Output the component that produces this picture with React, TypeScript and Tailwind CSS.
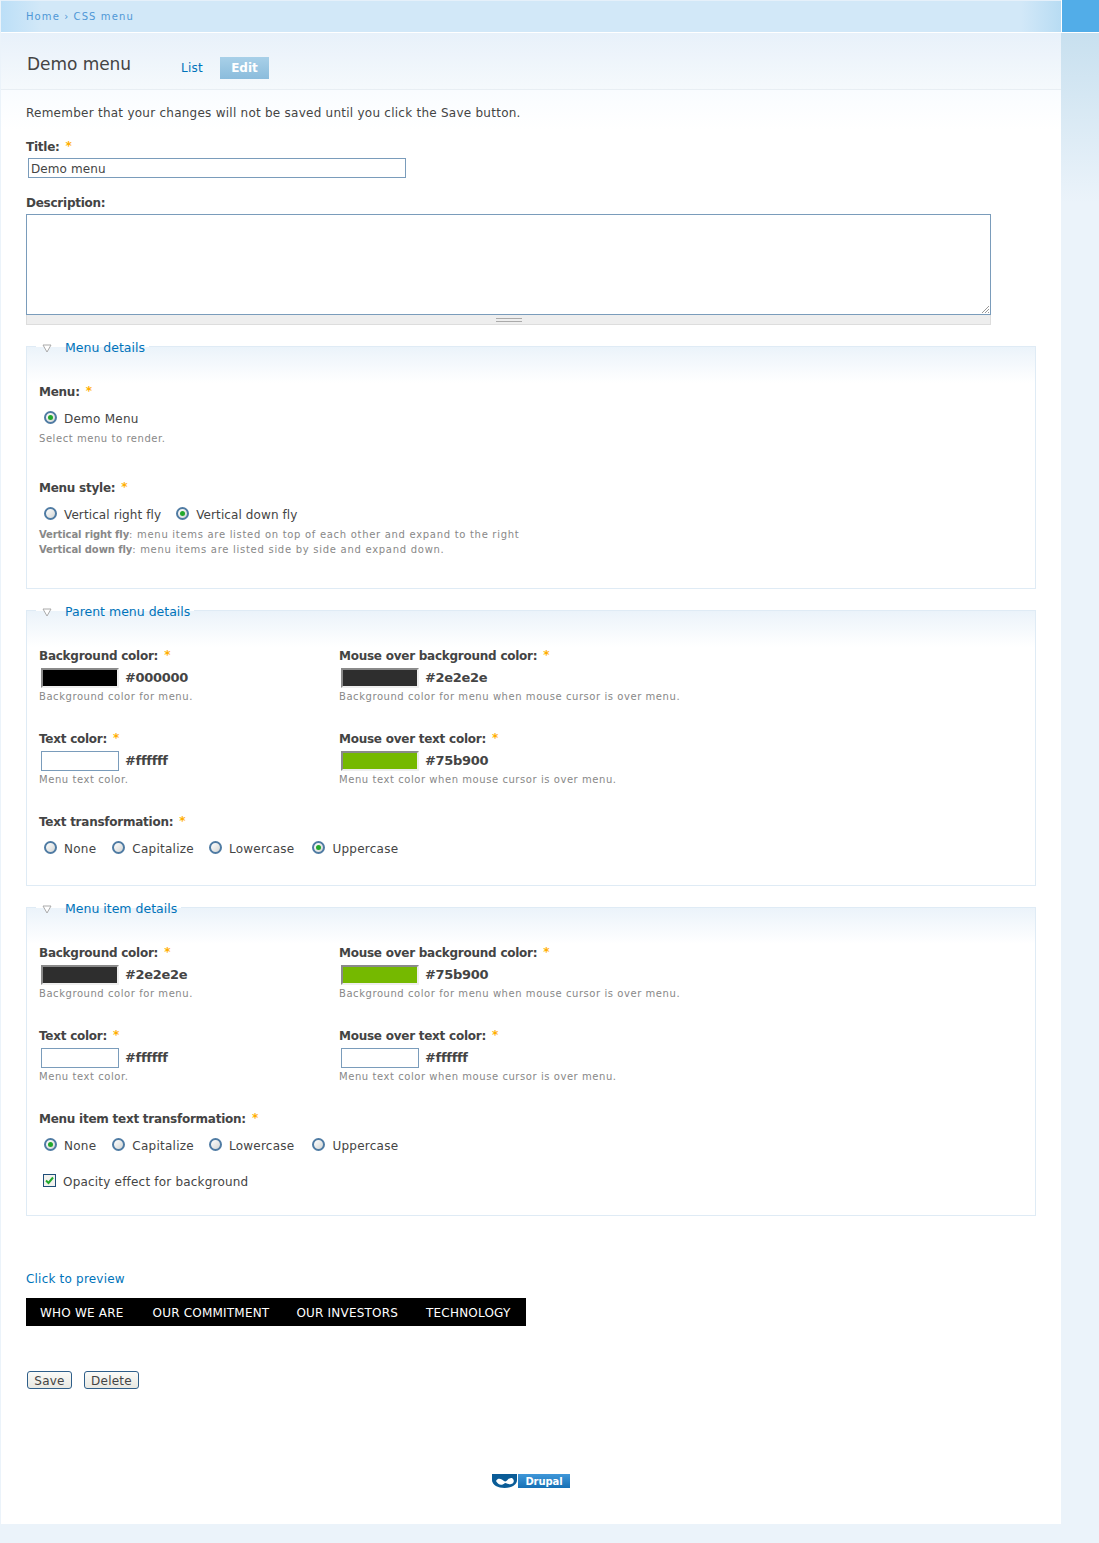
import React from "react";

const font = "font-['DejaVu_Sans','Verdana',sans-serif]";

function Star() {
  return <span className="ml-[6px] align-[1px] font-bold tracking-normal text-[#ffae00]">*</span>;
}

function FieldLabel({ children, required = true }: { children: React.ReactNode; required?: boolean }) {
  return (
    <div className="h-[16px] pt-px text-[12px] leading-[16px] font-bold tracking-[-0.25px] text-[#444]">
      {children}
      {required && <Star />}
    </div>
  );
}

function Hint({ children }: { children: React.ReactNode }) {
  return <div className="text-[10px] leading-[15px] tracking-[0.56px] text-[#888]">{children}</div>;
}

function Radio({
  label,
  checked = false,
  tracking = "tracking-[0.25px]",
}: {
  label: string;
  checked?: boolean;
  tracking?: string;
}) {
  return (
    <label className={`flex items-center text-[12px] leading-[16px] text-[#444] ${tracking}`}>
      <span className="mr-[7px] -mt-[4px] flex h-[13px] w-[13px] items-center justify-center rounded-full border-2 border-[#4f7ba3] bg-gradient-to-br from-[#ffffff] to-[#d4d6d4]">
        {checked && <span className="h-[5px] w-[5px] rounded-full bg-[#22a82c]" />}
      </span>
      {label}
    </label>
  );
}

function RadioRow({
  items,
  checked,
  tracking,
}: {
  items: { label: string; mr: string }[];
  checked: string;
  tracking?: string;
}) {
  return (
    <div className="mt-[13px] flex pl-[5px]">
      {items.map((item) => (
        <div key={item.label} className={item.mr}>
          <Radio label={item.label} checked={item.label === checked} tracking={tracking} />
        </div>
      ))}
    </div>
  );
}

function ColorField({
  label,
  value,
  swatch,
  hint,
}: {
  label: string;
  value: string;
  swatch: string;
  hint: string;
}) {
  const white = swatch === "#ffffff";
  return (
    <div className="h-[83px]">
      <FieldLabel>{label}</FieldLabel>
      <div className="mt-[6px] flex h-[20px] items-center pl-[2px]">
        <div
          className={
            white
              ? "h-[20px] w-[78px] border border-[#7a9cbb] bg-white"
              : "h-[20px] w-[78px] border-2 border-[#8a8a8a] border-r-[#eee] border-b-[#eee]"
          }
          style={{ backgroundColor: swatch }}
        />
        <span className="ml-[6px] text-[13px] font-bold tracking-[-0.3px] text-[#444]">{value}</span>
      </div>
      <div className="mt-[1px]">
        <Hint>{hint}</Hint>
      </div>
    </div>
  );
}

function Box({ title, height, children }: { title: string; height: string; children: React.ReactNode }) {
  return (
    <fieldset
      className={`${height} border border-[#dfebf5] bg-[linear-gradient(#ebf3fa,#ffffff_36px)] px-[12px]`}
    >
      <legend className="-ml-[3px] flex h-[16px] items-center pt-[5px] pr-[4px] pl-[6px] text-[12.5px] text-[#0073ba]">
        <svg width="10" height="9" viewBox="0 0 10 9" className="mr-[13px]">
          <path d="M1 1 H9 L5 8 Z" fill="#fff" stroke="#aaa" />
        </svg>
        {title}
      </legend>
      {children}
    </fieldset>
  );
}

const transforms = [
  { label: "None", mr: "mr-[16px]" },
  { label: "Capitalize", mr: "mr-[15px]" },
  { label: "Lowercase", mr: "mr-[18px]" },
  { label: "Uppercase", mr: "" },
];

export default function App() {
  return (
    <div className={`${font} flex h-[1543px] flex-col bg-[#ebf3fa] pl-px`}>
      <div className="flex h-[1524px]">
        {/* Main column */}
        <main className="w-[1060px] shrink-0 bg-white">
          <div className="flex h-[33px] items-center border-t border-b border-t-[#e5f0fa] border-b-white bg-[linear-gradient(90deg,#bcdff7,#d2e8f8_40px,#d2e8f8_1020px,#b8dcf3)] pl-[25px] text-[10px] tracking-[1.1px] text-[#4f97d6]">
            Home › CSS menu
          </div>

          {/* Title and tabs */}
          <div className="flex h-[57px] items-center border-b border-[#e8eef3] bg-[linear-gradient(#e8f1fa,#f5f9fc)] pl-[26px]">
            <h1 className="mt-[7px] w-[154px] text-[17px] tracking-[-0.05px] text-[#444]">Demo menu</h1>
            <a className="mt-[13px] text-[12px] tracking-[0.25px] text-[#0073ba]">List</a>
            <span className="mt-[13px] ml-[17px] flex h-[22px] w-[49px] items-center justify-center bg-[linear-gradient(#a8d0e8,#8bbcdc)] text-[12px] font-bold text-white">
              Edit
            </span>
          </div>

          <div className="bg-[linear-gradient(#f9fcff,#ffffff_40px)] px-[25px] pt-[15px]">
            <p className="text-[12px] leading-[16px] tracking-[0.25px] text-[#444]">
              Remember that your changes will not be saved until you click the Save button.
            </p>

            <div className="mt-[16px]">
              <FieldLabel>Title:</FieldLabel>
            </div>
            <input
              readOnly
              value="Demo menu"
              className="mt-[5px] ml-[2px] block h-[20px] w-[378px] border border-[#7a9cbb] px-[2px] pt-px text-[12px] tracking-[0.1px] text-[#444]"
            />

            <div className="mt-[16px]">
              <FieldLabel required={false}>Description:</FieldLabel>
            </div>
            <div className="mt-[4px] w-[965px]">
              <div className="relative h-[101px] border border-[#7a9cbb] bg-white">
                <svg width="8" height="8" viewBox="0 0 8 8" className="absolute right-[1px] bottom-[1px]">
                  <path d="M1 8 L8 1 M4 8 L8 4 M7 8 L8 7" stroke="#999" />
                </svg>
              </div>
              <div className="flex h-[10px] items-center justify-center border-r border-b border-l border-[#ddd] bg-[#eee]">
                <div className="h-[4px] w-[26px] border-t border-b border-[#aaa]" />
              </div>
            </div>

            {/* Menu details */}
            <div className="mt-[13px] w-[1010px]">
              <Box title="Menu details" height="h-[251px]">
                <div className="pt-[28px]">
                  <FieldLabel>Menu:</FieldLabel>
                  <div className="mt-[13px] pl-[5px]">
                    <Radio label="Demo Menu" checked />
                  </div>
                  <div className="mt-[4px]">
                    <Hint>Select menu to render.</Hint>
                  </div>
                  <div className="mt-[32px]">
                    <FieldLabel>Menu style:</FieldLabel>
                  </div>
                  <RadioRow
                    tracking="tracking-[0.1px]"
                    items={[
                      { label: "Vertical right fly", mr: "mr-[15px]" },
                      { label: "Vertical down fly", mr: "" },
                    ]}
                    checked="Vertical down fly"
                  />
                  <div className="mt-[4px]">
                    <Hint>
                      <strong className="tracking-[-0.1px]">Vertical right fly</strong>
                      <span className="tracking-[0.7px]">: menu items are listed on top of each other and expand to the right</span>
                    </Hint>
                    <Hint>
                      <strong className="tracking-[-0.1px]">Vertical down fly</strong>
                      <span className="tracking-[0.72px]">: menu items are listed side by side and expand down.</span>
                    </Hint>
                  </div>
                </div>
              </Box>
            </div>

            {/* Parent menu details */}
            <div className="mt-[13px] w-[1010px]">
              <Box title="Parent menu details" height="h-[284px]">
                <div className="pt-[28px]">
                  <div className="grid grid-cols-[300px_1fr]">
                    <ColorField label="Background color:" value="#000000" swatch="#000000" hint="Background color for menu." />
                    <ColorField
                      label="Mouse over background color:"
                      value="#2e2e2e"
                      swatch="#2e2e2e"
                      hint="Background color for menu when mouse cursor is over menu."
                    />
                    <ColorField label="Text color:" value="#ffffff" swatch="#ffffff" hint="Menu text color." />
                    <ColorField
                      label="Mouse over text color:"
                      value="#75b900"
                      swatch="#75b900"
                      hint="Menu text color when mouse cursor is over menu."
                    />
                  </div>
                  <FieldLabel>Text transformation:</FieldLabel>
                  <RadioRow items={transforms} checked="Uppercase" />
                </div>
              </Box>
            </div>

            {/* Menu item details */}
            <div className="mt-[13px] w-[1010px]">
              <Box title="Menu item details" height="h-[317px]">
                <div className="pt-[28px]">
                  <div className="grid grid-cols-[300px_1fr]">
                    <ColorField label="Background color:" value="#2e2e2e" swatch="#2e2e2e" hint="Background color for menu." />
                    <ColorField
                      label="Mouse over background color:"
                      value="#75b900"
                      swatch="#75b900"
                      hint="Background color for menu when mouse cursor is over menu."
                    />
                    <ColorField label="Text color:" value="#ffffff" swatch="#ffffff" hint="Menu text color." />
                    <ColorField
                      label="Mouse over text color:"
                      value="#ffffff"
                      swatch="#ffffff"
                      hint="Menu text color when mouse cursor is over menu."
                    />
                  </div>
                  <FieldLabel>Menu item text transformation:</FieldLabel>
                  <RadioRow items={transforms} checked="None" />
                  <label className="mt-[20px] flex items-center pl-[4px] text-[12px] leading-[16px] tracking-[0.2px] text-[#444]">
                    <span className="mr-[7px] -mt-[3px] flex h-[13px] w-[13px] items-center justify-center border border-[#1f4e79] bg-[#f2f2ee]">
                      <svg width="9" height="9" viewBox="0 0 9 9">
                        <path d="M1 4.5 L3.5 7 L8 1.5" fill="none" stroke="#22a82c" strokeWidth="2" />
                      </svg>
                    </span>
                    Opacity effect for background
                  </label>
                </div>
              </Box>
            </div>

            {/* Preview */}
            <a className="mt-[55px] block text-[12px] leading-[16px] tracking-[0.2px] text-[#0073ba]">Click to preview</a>
            <div className="mt-[11px] flex h-[28px] w-[500px] items-center bg-black pt-[1px] pl-[14px] text-[12px] tracking-[0.2px] text-white">
              <span className="mr-[29px]">WHO WE ARE</span>
              <span className="mr-[27px]">OUR COMMITMENT</span>
              <span className="mr-[28px]">OUR INVESTORS</span>
              <span>TECHNOLOGY</span>
            </div>

            <div className="mt-[45px] flex pl-px">
              <button className="h-[18px] w-[45px] rounded-[3px] border border-[#2f5f8a] bg-[linear-gradient(#fbfbf8,#e8e8e2)] pt-[1px] text-[12px] leading-none tracking-[0.25px] text-[#444]">
                Save
              </button>
              <button className="ml-[12px] h-[18px] w-[55px] rounded-[3px] border border-[#2f5f8a] bg-[linear-gradient(#fbfbf8,#e8e8e2)] pt-[1px] text-[12px] leading-none tracking-[0.25px] text-[#444]">
                Delete
              </button>
            </div>

            {/* Drupal badge */}
            <div className="mt-[85px] flex justify-center pr-[1px]">
              <div className="flex h-[14px] items-center">
                <svg width="25" height="14" viewBox="0 0 25 14">
                  <path d="M0 0 H25 V6 C25 11 19 14 12.5 14 C6 14 0 11 0 6 Z" fill="#0a5c97" />
                  <path d="M4 7 C6 3 10 5 12 7 C15 9 16 3 20 4 C23 6 22 10 19 10 C17 11 15 9 13 9 C10 12 6 11 4 7 Z" fill="#fff" />
                </svg>
                <div className="ml-px flex h-[14px] w-[52px] items-center justify-end bg-[linear-gradient(#3f97d9,#1670b5)] pr-[7px] text-[10px] font-bold tracking-[-0.1px] text-white">
                  Drupal
                </div>
              </div>
            </div>
          </div>
        </main>

        {/* Right rail */}
        <aside className="flex-1">
          <div className="h-[33px] border-b border-l border-white bg-[#52ade8]" />
          <div className="h-[170px] bg-[linear-gradient(#c8e0ef,#ebf3fa)]" />
        </aside>
      </div>
    </div>
  );
}
